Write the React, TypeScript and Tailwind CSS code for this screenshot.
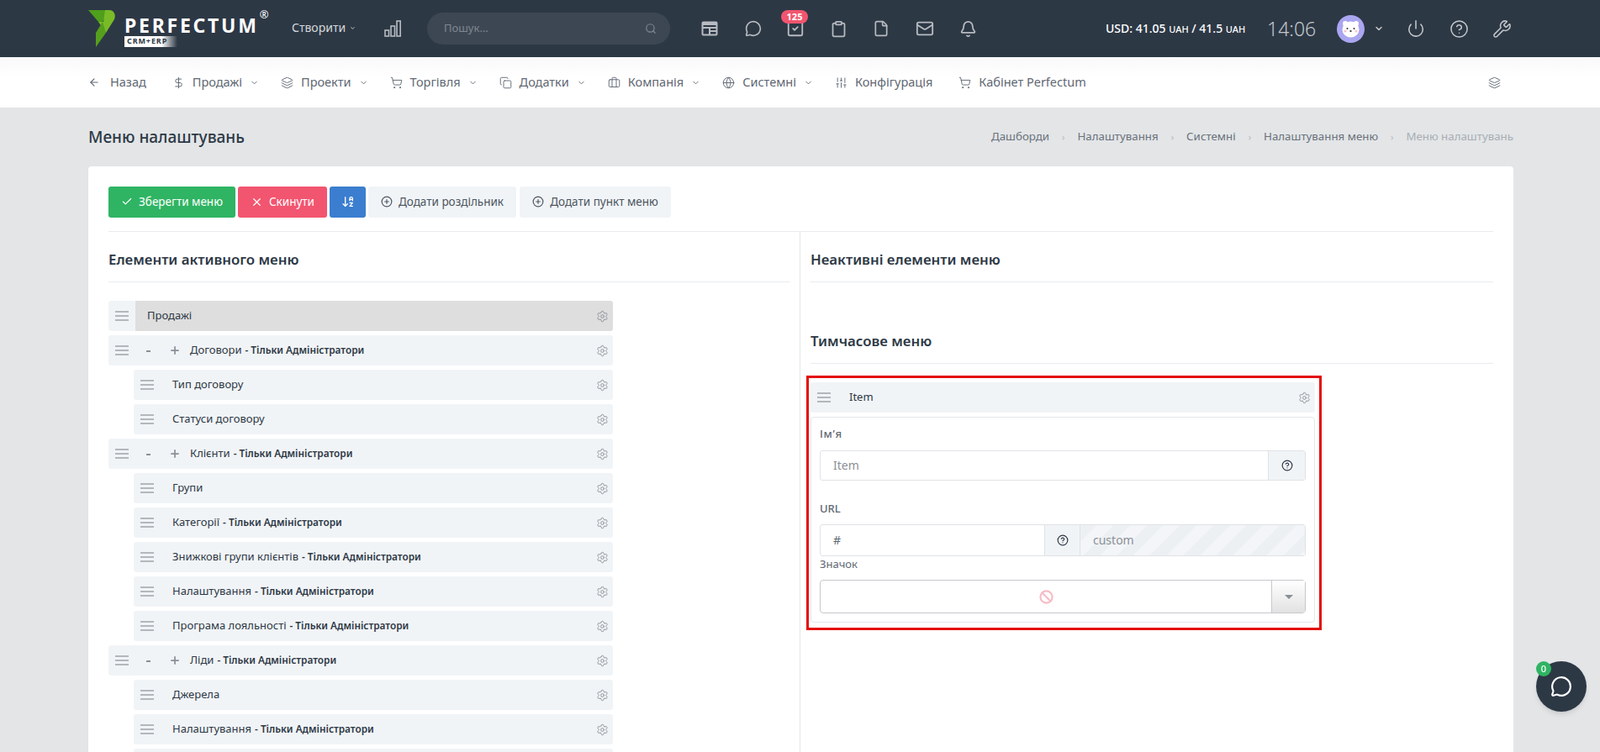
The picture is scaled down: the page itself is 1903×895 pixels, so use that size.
import {
  ArrowDownAZ,
  ArrowLeft,
  Ban,
  Bell,
  Briefcase,
  Check,
  ChevronDown,
  CircleHelp,
  CirclePlus,
  Clipboard,
  Copy,
  DollarSign,
  File,
  Globe,
  Layers,
  Mail,
  MessageCircle,
  Plus,
  Power,
  Search,
  Settings,
  ShoppingCart,
  SlidersVertical,
  SquareCheck,
  Wrench,
  X,
} from 'lucide-react'

const navItems = [
  { label: 'Продажі', icon: DollarSign, caret: true },
  { label: 'Проекти', icon: Layers, caret: true },
  { label: 'Торгівля', icon: ShoppingCart, caret: true },
  { label: 'Додатки', icon: Copy, caret: true },
  { label: 'Компанія', icon: Briefcase, caret: true },
  { label: 'Системні', icon: Globe, caret: true },
  { label: 'Конфігурація', icon: SlidersVertical, caret: false },
  { label: 'Кабінет Perfectum', icon: ShoppingCart, caret: false },
]

const crumbs = ['Дашборди', 'Налаштування', 'Системні', 'Налаштування меню']

const rows = [
  { name: 'Продажі', level: 0, active: true },
  { name: 'Договори', level: 0, admin: true, tree: true },
  { name: 'Тип договору', level: 1 },
  { name: 'Статуси договору', level: 1 },
  { name: 'Клієнти', level: 0, admin: true, tree: true },
  { name: 'Групи', level: 1 },
  { name: 'Категорії', level: 1, admin: true },
  { name: 'Знижкові групи клієнтів', level: 1, admin: true },
  { name: 'Налаштування', level: 1, admin: true },
  { name: 'Програма лояльності', level: 1, admin: true },
  { name: 'Ліди', level: 0, admin: true, tree: true },
  { name: 'Джерела', level: 1 },
  { name: 'Налаштування', level: 1, admin: true },
  { name: '', level: 1 },
]

function Handle() {
  return (
    <span className="flex w-4 flex-col gap-[3px]">
      <span className="h-[2px] bg-[#b4b7bb]" />
      <span className="h-[2px] bg-[#b4b7bb]" />
      <span className="h-[2px] bg-[#b4b7bb]" />
    </span>
  )
}

function Logo() {
  return (
    <div className="flex w-[242px] items-start">
      <svg width="33" height="44" viewBox="0 0 33 44" className="mt-[-1px]">
        <polygon points="0,0 25,0 17,14 12,14" fill="#4f9e1c" />
        <path d="M20 0h5c6 0 8 6 6 11L21 27 12 14h6z" fill="#79bb27" />
        <polygon points="21,27 9,44 9,27 17,14" fill="#569f1e" />
      </svg>
      <div className="ml-[10px] flex flex-col">
        <div className="flex items-start">
          <span className="mt-[3px] text-[23px] leading-[28px] font-bold tracking-[0.12em] text-white">PERFECTUM</span>
          <span className="mt-[-4px] ml-[1px] text-[13px] leading-4 text-white">®</span>
        </div>
        <div className="mt-[-1px] flex h-[13px] w-[63px] items-center bg-gradient-to-r from-white from-70% to-transparent pl-[3px] text-[9px] font-bold tracking-[0.1em] text-[#2d3845]">
          CRM+ERP
        </div>
      </div>
    </div>
  )
}

function Avatar() {
  return (
    <svg width="33" height="33" viewBox="0 0 33 33">
      <circle cx="16.5" cy="16.5" r="16.5" fill="#aaa6f0" />
      <circle cx="10" cy="10" r="3" fill="#fff" />
      <circle cx="23" cy="10" r="3" fill="#fff" />
      <ellipse cx="16.5" cy="17" rx="10" ry="9.5" fill="#fff" />
      <circle cx="12.5" cy="16" r="1" fill="#333" />
      <circle cx="20.5" cy="16" r="1" fill="#333" />
      <circle cx="10" cy="19" r="1.6" fill="#f7c3cf" />
      <circle cx="23" cy="19" r="1.6" fill="#f7c3cf" />
      <ellipse cx="16.5" cy="19" rx="1.2" ry="0.9" fill="#333" />
    </svg>
  )
}

function Header() {
  return (
    <header className="flex h-[68px] items-center bg-[#2d3845] pl-[105px] text-[#c3c7cc]">
      <Logo />
      <div className="mt-[-2px] flex w-[76px] items-center gap-[5px] text-sm text-[#d5d8db]">
        Створити
        <ChevronDown size={13} strokeWidth={3} />
      </div>
      <svg width="20" height="20" viewBox="0 0 20 20" fill="none" stroke="#b7bbc1" strokeWidth="1.6" className="ml-[34px]">
        <rect x="1" y="12" width="4.5" height="7" />
        <rect x="8" y="7" width="4.5" height="12" />
        <rect x="15" y="1" width="4.2" height="18" />
      </svg>
      <div className="ml-[31px] flex h-[38px] w-[289px] items-center justify-between rounded-full bg-[#3d4754] pr-4 pl-5 text-[13px] text-[#7f8792]">
        Пошук...
        <Search size={14} />
      </div>
      <div className="ml-[37px] flex items-center gap-[31px] text-[#b7bbc1]">
        <svg width="20" height="20" viewBox="0 0 20 20" fill="none" stroke="currentColor" strokeWidth="2">
          <rect x="1.5" y="2.5" width="17" height="15" rx="1" />
          <path d="M1.5 4.5h17" strokeWidth="3" />
          <path d="M1.5 9h17M10 9v8.5M10 13h8.5" />
        </svg>
        <MessageCircle size={20} strokeWidth={2} className="mr-[-1px] ml-[1px]" />
        <span className="relative flex">
          <SquareCheck size={22} strokeWidth={2} className="mx-[-1px]" />
          <span className="absolute top-[-11px] left-[-7px] flex h-4 w-8 items-center justify-center rounded-full bg-[#f2556f] text-[11px] font-bold text-white">
            125
          </span>
        </span>
        <Clipboard size={21} strokeWidth={2} className="mr-[-1px]" />
        <File size={20} strokeWidth={2} />
        <Mail size={22} strokeWidth={2} className="mr-[-1px]" />
        <Bell size={21} strokeWidth={2} className="mr-[-1px]" />
      </div>
      <div className="ml-[154px] w-[192px] text-sm font-medium whitespace-nowrap text-white">
        USD: 41.05 <span className="text-[11px]">UAH</span> / 41.5 <span className="text-[11px]">UAH</span>
      </div>
      <div className="w-[83px] text-[23px] font-light text-[#c3c7cc]">14:06</div>
      <Avatar />
      <ChevronDown size={12} strokeWidth={3} className="ml-[11px]" />
      <Power size={22} strokeWidth={1.7} className="ml-[27px]" />
      <CircleHelp size={23} strokeWidth={1.6} className="ml-[29px]" />
      <Wrench size={23} strokeWidth={1.6} className="ml-[28px]" />
    </header>
  )
}

function Nav() {
  return (
    <nav className="flex h-[60px] items-center bg-gradient-to-b from-[#f9f9f9] to-white to-40% pr-[118px] pl-[105px] text-[14.5px] text-[#5f6873]">
      <div className="mr-[31px] flex items-center gap-[12px]">
        <ArrowLeft size={14} />
        Назад
      </div>
      <div className="flex items-center gap-[26px]">
        {navItems.map((item) => (
          <div key={item.label} className="flex items-center gap-[9px] last:ml-[5px]">
            <item.icon size={15} strokeWidth={1.5} />
            <span className="flex items-center gap-[9px]">
              {item.label}
              {item.caret ? <ChevronDown size={11} /> : null}
            </span>
          </div>
        ))}
      </div>
      <Layers size={15} strokeWidth={1.5} className="ml-auto" />
    </nav>
  )
}

function MenuRow({ row }: { row: (typeof rows)[number] }) {
  return (
    <div
      className={`flex h-[36px] items-center rounded-[3px] bg-[#f1f4f7] text-[13px] text-[#2d3845] ${
        row.level ? 'ml-[30px]' : ''
      }`}
    >
      <div className="flex h-full w-[32px] shrink-0 items-center justify-center">
        <Handle />
      </div>
      <div className={`flex h-full flex-1 items-center rounded-r-[3px] pr-[5px] ${row.active ? 'bg-[#dedede]' : ''}`}>
        {row.tree ? (
          <>
            <span className="mt-[2px] ml-[13px] h-[2px] w-[5px] bg-[#8a9097]" />
            <Plus size={14} strokeWidth={3} className="ml-[22px] text-[#8a9097]" />
            <span className="ml-[11px]">{row.name}</span>
          </>
        ) : (
          <span className="ml-[14px]">{row.name}</span>
        )}
        {row.admin ? <span className="ml-1 text-[11.8px] font-semibold whitespace-nowrap">- Тільки Адміністратори</span> : null}
        <Settings size={15} strokeWidth={1.5} className="ml-auto text-[#8a8f95]" />
      </div>
    </div>
  )
}

function ItemPanel() {
  return (
    <div className="ml-[-5px] w-[613px] border-3 border-[#e30b0b] pt-[5px] pr-[5px] pb-[6px] pl-[2px]">
      <div className="flex h-[36px] items-center rounded-[3px] bg-[#f1f4f7] pr-[5px] pl-[8px] text-[13px] text-[#2d3845]">
        <Handle />
        <span className="ml-[22px]">Item</span>
        <Settings size={15} strokeWidth={1.5} className="ml-auto text-[#8a8f95]" />
      </div>
      <div className="mt-[5px] h-[245px] rounded-[4px] border border-[#e3e6e9] pt-[10px] pr-[10px] pl-[10px] text-[13px] text-[#5f6873]">
        <div className="h-[18px] font-medium tracking-[0.05em]">Імʼя</div>
        <div className="mt-[11px] flex h-[36px] rounded-[3px] border border-[#dfe2e6]">
          <div className="flex flex-1 items-center pl-[15px] text-sm text-[#8a9097]">Item</div>
          <div className="flex w-[44px] items-center justify-center border-l border-[#dfe2e6] bg-[#f1f4f7] text-[#2d3845]">
            <CircleHelp size={14} />
          </div>
        </div>
        <div className="mt-[24px] h-[18px] font-medium">URL</div>
        <div className="mt-[10px] flex h-[38px] rounded-[3px] border border-[#dfe2e6]">
          <div className="flex w-[266px] items-center pl-[15px] text-sm text-[#5f6873]">#</div>
          <div className="flex w-[43px] items-center justify-center border-x border-[#dfe2e6] bg-[#f1f4f7] text-[#2d3845]">
            <CircleHelp size={14} />
          </div>
          <div className="flex flex-1 items-center bg-[#f1f4f7] bg-[repeating-linear-gradient(135deg,#edf0f3_0,#edf0f3_14px,#f3f5f8_14px,#f3f5f8_28px)] pl-[15px] text-sm text-[#8a9097]">
            custom
          </div>
        </div>
        <div className="h-[18px]">Значок</div>
        <div className="mt-[10px] flex h-[40px] rounded-[4px] border border-[#c6c8cb]">
          <div className="flex flex-1 items-center justify-center">
            <Ban size={17} strokeWidth={3} className="text-[#f6bcc6]" />
          </div>
          <div className="flex w-[40px] items-center justify-center border-l border-[#c6c8cb] bg-gradient-to-b from-white to-[#e2e2e2]">
            <span className="h-0 w-0 border-x-[5px] border-t-[5px] border-x-transparent border-t-[#8a8f95]" />
          </div>
        </div>
      </div>
    </div>
  )
}

function Btn({ className, children }: { className: string; children: React.ReactNode }) {
  return (
    <button className={`flex h-[37px] items-center justify-center gap-[7px] rounded-[3px] pb-[1px] text-[13.5px] ${className}`}>
      {children}
    </button>
  )
}

export default function App() {
  return (
    <div className="flex h-[895px] flex-col overflow-hidden bg-[#e3e5e7] font-['Roboto',sans-serif]">
      <Header />
      <Nav />
      <main className="flex min-h-0 flex-1 flex-col pr-[103px] pl-[105px]">
        <div className="flex h-[70px] items-center justify-between">
          <h1 className="text-[19px] font-medium text-[#2d3845]">Меню налаштувань</h1>
          <div className="flex items-center text-[13.3px] text-[#6a727c]">
            {crumbs.map((c) => (
              <span key={c} className="flex items-center">
                {c}
                <span className="mx-[15px] text-[11px] text-[#b5b9be]">›</span>
              </span>
            ))}
            <span className="text-[#a9aeb4]">Меню налаштувань</span>
          </div>
        </div>
        <section className="flex min-h-0 flex-1 flex-col rounded-t-[4px] bg-white px-6 pt-6">
          <div className="flex gap-[3px] border-b border-[#e9ebee] pb-4">
            <Btn className="w-[151px] bg-[#2fb463] text-white">
              <Check size={14} />
              Зберегти меню
            </Btn>
            <Btn className="w-[106px] bg-[#f2556f] text-white">
              <X size={15} />
              Скинути
            </Btn>
            <Btn className="w-[43px] bg-[#3b7ecf] text-white">
              <ArrowDownAZ size={16} />
            </Btn>
            <Btn className="w-[176px] bg-[#f1f4f7] text-[#4d5661]">
              <CirclePlus size={14} />
              Додати роздільник
            </Btn>
            <Btn className="ml-[1px] w-[180px] bg-[#f1f4f7] text-[#4d5661]">
              <CirclePlus size={14} />
              Додати пункт меню
            </Btn>
          </div>
          <div className="flex min-h-0 flex-1">
            <div className="w-[823px] border-r border-[#e3e6e9] pr-3">
              <h2 className="flex h-[60px] items-center border-b border-[#e9ebee] pt-[6px] text-[16.8px] font-semibold text-[#2d3845]">
                Елементи активного меню
              </h2>
              <div className="mt-[22px] flex w-[600px] flex-col gap-[5px]">
                {rows.map((row, i) => (
                  <MenuRow key={i} row={row} />
                ))}
              </div>
            </div>
            <div className="flex-1 pl-3">
              <h2 className="flex h-[60px] items-center border-b border-[#e9ebee] pt-[6px] text-[16.8px] font-semibold text-[#2d3845]">
                Неактивні елементи меню
              </h2>
              <h2 className="mt-[37px] flex h-[60px] items-center border-b border-[#e9ebee] pt-[6px] text-[16.8px] font-semibold text-[#2d3845]">
                Тимчасове меню
              </h2>
              <div className="mt-[14px]">
                <ItemPanel />
              </div>
            </div>
          </div>
        </section>
      </main>
      <div className="fixed top-[787px] left-[1827px] flex h-[60px] w-[60px] items-center justify-center rounded-full bg-[#2d3845] text-white shadow-md">
        <MessageCircle size={26} strokeWidth={2} />
        <span className="absolute top-0 left-0 flex h-[18px] w-[18px] items-center justify-center rounded-full bg-[#2fb463] text-[11px] font-medium">
          0
        </span>
      </div>
    </div>
  )
}
